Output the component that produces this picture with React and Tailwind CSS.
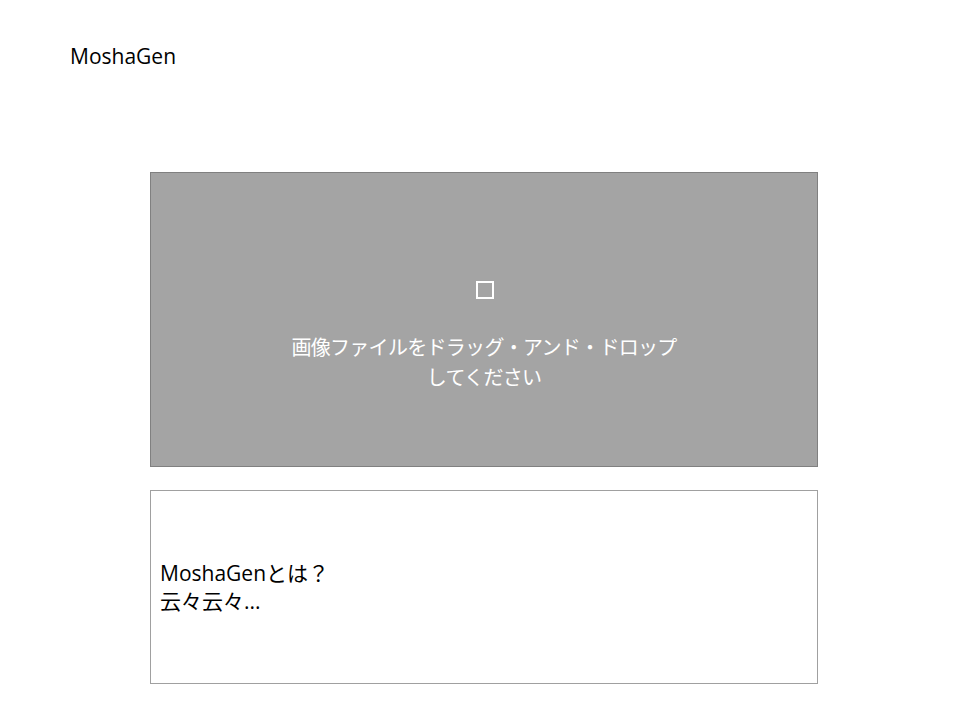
export default function App() {
  return (
    <main
      className="min-h-screen w-[960px] bg-white text-black"
      style={{ fontFamily: '"Open Sans", "Noto Sans CJK JP", sans-serif' }}
    >
      <header className="h-[172px] pl-[70px] pt-[42px]">
        <h1 className="text-[21px] leading-[28px]">MoshaGen</h1>
      </header>

      <section className="ml-[150px] w-[668px]">
        {/* drop zone */}
        <div className="flex h-[295px] flex-col items-center border border-[#808080] bg-[#a4a4a4] pt-[108px] text-white">
          <div className="ml-[1px] h-[18px] w-[18px] border-2 border-white" />
          <p className="mt-[34px] text-center text-[20px] leading-[30px] tracking-[-0.7px]">
            画像ファイルをドラッグ・アンド・ドロップ
            <br />
            してください
          </p>
        </div>

        <div className="mt-[23px] flex h-[194px] flex-col justify-center border border-[#a0a0a0] px-[9px] text-[21px] leading-[28px]">
          <p>MoshaGenとは？</p>
          <p>云々云々...</p>
        </div>
      </section>
    </main>
  );
}
